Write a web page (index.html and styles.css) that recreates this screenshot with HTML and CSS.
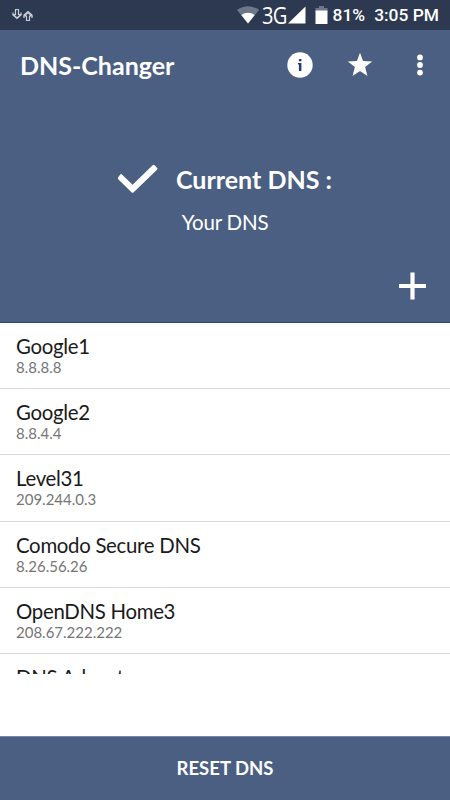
FILE: index.html
```html
<!DOCTYPE html>
<html lang="en">
<head>
    <meta charset="UTF-8">
    <meta name="viewport" content="width=device-width, initial-scale=1.0">
    <title>DNS-Changer</title>
    <link rel="stylesheet" href="styles.css">
</head>
<body>
    <div class="app">
        <div class="status-bar">
            <svg class="transfer-icon" width="22" height="15" viewBox="0 0 22 15" fill="none" stroke="#c9ced6" stroke-width="1.2">
                <path d="M3.5 1.5h3v5h2.2L5 10 1.3 6.5h2.2z M1 4.5v2.5l4 3.5 4-3.5V4.5"/>
                <path d="M14.5 12.5h3V8h2.2L16 4.5 12.3 8h2.2z M12 10V7l4-3.5L20 7v3"/>
            </svg>
            <svg class="wifi-icon" width="22" height="18" viewBox="0 0 22 18">
                <path d="M0 4Q11-3.5 22 4L11 17.5z" fill="#6c778a"/>
                <path d="M4.3 9Q11 4.5 17.7 9L11 17.5z" fill="#fff"/>
            </svg>
            <span class="network">3G</span>
            <svg class="signal-icon" width="18" height="18" viewBox="0 0 18 18">
                <path d="M17.5 0.5v17H0z" fill="#fff"/>
            </svg>
            <svg class="battery-icon" width="13" height="18" viewBox="0 0 13 18">
                <path d="M4 0h5v2h3.5v4H0.5V2H4z" fill="#6c778a"/>
                <path d="M0.5 4.5h12V18h-12z" fill="#fff"/>
            </svg>
            <span class="battery-level">81%</span>
            <span class="clock">3:05 PM</span>
        </div>

        <div class="header">
            <div class="toolbar">
                <h1>DNS-Changer</h1>
                <svg class="info-icon" width="26" height="26" viewBox="0 0 26 26">
                    <circle cx="13" cy="13" r="12.7" fill="#fff"/>
                    <path d="M11.9 7h2.5v2.3h-2.5z M11 11h3.4v8h-2.5v-6.6H11z" fill="#1f3f70"/>
                </svg>
                <svg class="star-icon" width="26" height="26" viewBox="0 0 26 26">
                    <path d="M13 0.8l3.1 8.3 9.1.4-7.1 5.6 2.4 8.8L13 18.9l-7.5 5L7.9 15.1.8 9.5l9.1-.4z" fill="#fff"/>
                </svg>
                <svg class="menu-icon" width="8" height="22" viewBox="0 0 8 22" fill="#fff">
                    <circle cx="4" cy="3.4" r="2.9"/>
                    <circle cx="4" cy="11" r="2.9"/>
                    <circle cx="4" cy="18.6" r="2.9"/>
                </svg>
            </div>

            <div class="current">
                <svg class="check-icon" width="42" height="30" viewBox="0 0 42 30">
                    <path d="M4.7 10.2L15.6 20.7 35.6 1.3Q36.6.4 37.6 1.3L40 3.7Q41 4.7 40 5.7L16.7 28.2Q15.6 29.2 14.5 28.2L1.2 15.3Q.2 14.3 1.2 13.3L2.9 11Q3.8 9.6 4.7 10.2z" fill="#fff"/>
                </svg>
                <h2>Current DNS :</h2>
            </div>
            <p class="current-name">Your DNS</p>

            <div class="add-row">
                <svg class="add-icon" width="28" height="28" viewBox="0 0 28 28">
                    <path d="M14.5 0.5v27M1 14h27" stroke="#fff" stroke-width="4.2"/>
                </svg>
            </div>
        </div>

        <ul class="dns-list">
            <li>
                <span class="name">Google1</span>
                <span class="ip">8.8.8.8</span>
            </li>
            <li>
                <span class="name">Google2</span>
                <span class="ip">8.8.4.4</span>
            </li>
            <li>
                <span class="name">Level31</span>
                <span class="ip">209.244.0.3</span>
            </li>
            <li>
                <span class="name">Comodo Secure DNS</span>
                <span class="ip">8.26.56.26</span>
            </li>
            <li>
                <span class="name">OpenDNS Home3</span>
                <span class="ip">208.67.222.222</span>
            </li>
            <li>
                <span class="name">DNS Advantage</span>
            </li>
        </ul>

        <button class="reset">RESET DNS</button>
    </div>
</body>
</html>
```
FILE: styles.css
```css
* {
    box-sizing: border-box;
}
body {
    margin: 0;
    font-family: Lato, sans-serif;
    background-color: #fff;
}
svg {
    display: block;
    flex: none;
}
h1, h2, p, ul {
    margin: 0;
    padding: 0;
}
.app {
    display: flex;
    flex-direction: column;
    width: 450px;
    height: 800px;
    overflow: hidden;
}
.status-bar {
    display: flex;
    align-items: center;
    flex: none;
    height: 30px;
    padding: 0 11px 0 12px;
    background-color: #2d3950;
    color: #fff;
    font-family: Roboto, sans-serif;
    font-size: 17.4px;
    font-weight: 500;
    line-height: 32px;
    white-space: nowrap;
}
.wifi-icon {
    margin-left: auto;
}
.network {
    width: 25px;
    margin-left: 3px;
    font-family: "Open Sans", sans-serif;
    font-size: 24px;
    font-weight: 400;
    letter-spacing: -1px;
    transform: scaleX(0.84);
    transform-origin: left;
}
.signal-icon {
    margin-left: 1px;
}
.battery-icon {
    margin-left: 9px;
}
.battery-level {
    margin-left: 5px;
}
.clock {
    margin-left: 9px;
}
.header {
    flex: none;
    height: 293px;
    background-color: #4b5f82;
    border-bottom: 1px solid #1c4680;
    color: #fff;
}
.toolbar {
    display: flex;
    align-items: center;
    height: 70px;
    padding: 0 26px 0 20px;
}
.toolbar h1 {
    flex: 1;
    font-size: 25px;
    font-weight: 700;
    line-height: 32px;
}
.star-icon {
    margin-left: 34px;
}
.menu-icon {
    margin-left: 43px;
}
.current {
    display: flex;
    align-items: center;
    height: 40px;
    margin-top: 59px;
    padding-left: 117px;
}
.current h2 {
    margin-left: 17px;
    font-size: 25px;
    font-weight: 700;
    line-height: 32px;
}
.current-name {
    margin-top: 10px;
    text-align: center;
    font-size: 20.5px;
    letter-spacing: -0.2px;
    line-height: 26px;
}
.add-row {
    display: flex;
    justify-content: flex-end;
    margin-top: 37px;
    padding-right: 24px;
}
.dns-list {
    flex: none;
    height: 351px;
    overflow: hidden;
    list-style: none;
}
.dns-list li {
    height: 66.2px;
    padding: 11px 16px 0;
    border-bottom: 1px solid #d9d9d9;
}
.name, .ip {
    display: block;
}
.name {
    color: #1a1a1a;
    font-size: 20.4px;
    letter-spacing: -0.3px;
    line-height: 25px;
}
.ip {
    color: #757575;
    font-size: 15px;
    line-height: 16px;
}
.reset {
    flex: none;
    height: 64px;
    margin-top: auto;
    padding: 0 0 2px;
    border: none;
    border-top: 1px solid #7285a3;
    background-color: #4b5f82;
    color: #fff;
    font-family: Lato, sans-serif;
    font-size: 18.5px;
    font-weight: 700;
    cursor: pointer;
}
```
